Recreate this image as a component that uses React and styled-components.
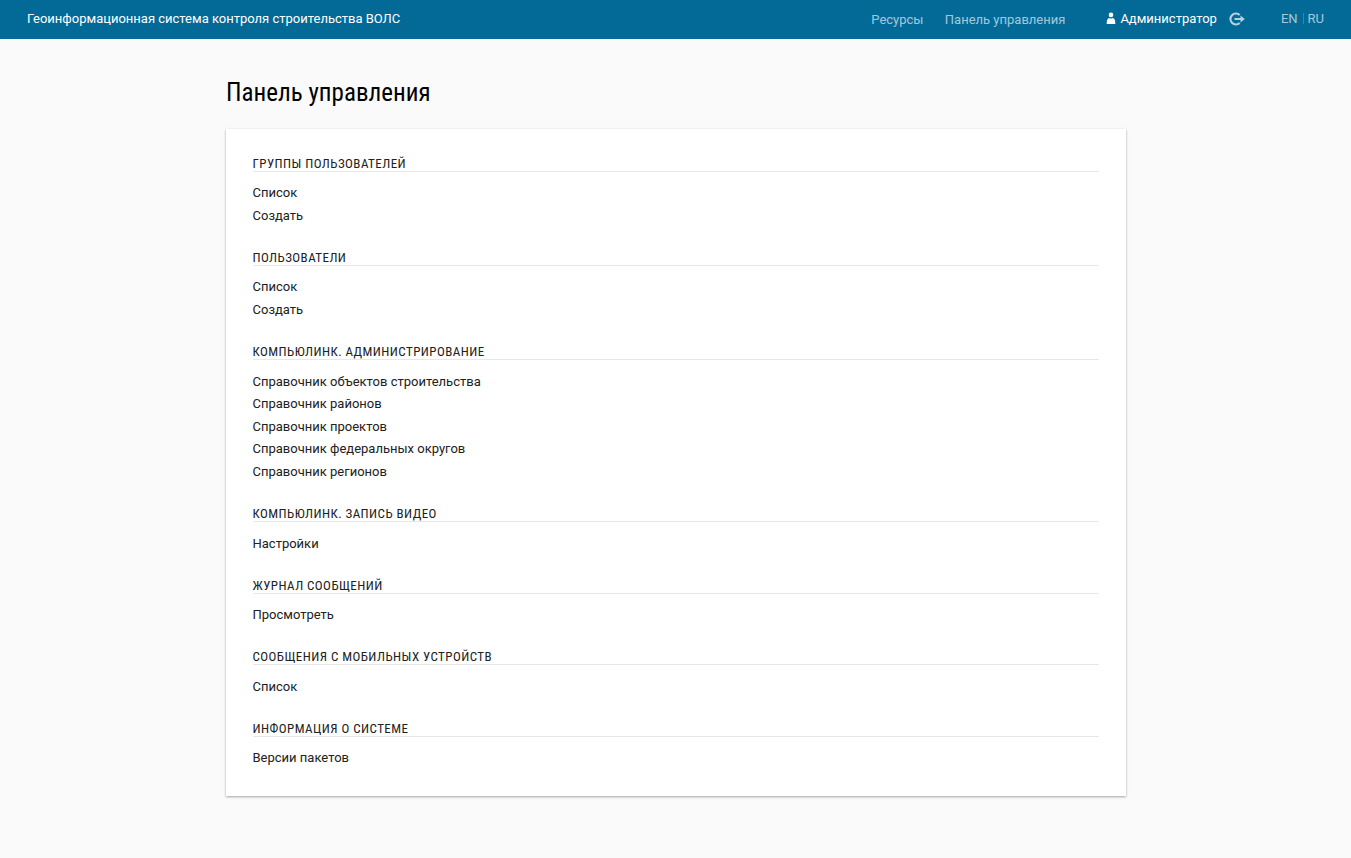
import React from 'react';
import styled, { createGlobalStyle } from 'styled-components';

const Global = createGlobalStyle`
  *{box-sizing:border-box}
  body{margin:0;background:#fafafa;font:13px/22.63px Roboto,sans-serif;color:#212121}
  a{color:inherit;text-decoration:none}
`;
const Header = styled.header`
  height:39px;background:#036a98;color:#fff;display:flex;align-items:center;padding:0 27px;line-height:20px;white-space:nowrap;
`;
const Brand = styled.a`margin-right:auto;padding-bottom:2px;`;
const Nav = styled.nav`display:flex;gap:21.4px;color:rgba(255,255,255,.65);margin-right:41px;`;
const User = styled.div`display:flex;align-items:center;padding-bottom:2px;margin-right:36px;`;
const UserIcon = styled.svg`width:10px;height:12px;margin:0 4px 1px 0;`;
const LogoutIcon = styled.svg`width:16px;height:14px;margin-left:12px;opacity:.7;`;
const Langs = styled.div`display:flex;align-items:center;padding-bottom:2px;color:rgba(255,255,255,.65);`;
const Divider = styled.span`width:1px;height:11px;margin:0 4px 0 5px;background:rgba(255,255,255,.2);`;
const Main = styled.main`width:900px;margin:0 auto;padding:37px 0 60px;`;
const Title = styled.h1`
  margin:0 0 21px;font:400 26px/32px Roboto,sans-serif;font-stretch:75%;color:#000;
  transform:scaleX(.962);transform-origin:left;
`;
const Card = styled.div`
  height:667px;background:#fff;padding:26.05px 27px;box-shadow:0 1px 3px rgba(0,0,0,.12),0 1px 2px rgba(0,0,0,.24);
`;
const Section = styled.section`margin-bottom:21.54px;`;
const Heading = styled.h2`
  margin:0 0 10.34px;height:17px;border-bottom:1px solid #e8e8e8;
  font:400 13px/17px Roboto,sans-serif;font-stretch:75%;letter-spacing:.45px;text-transform:uppercase;
`;
const Item = styled.a`display:block;height:22.63px;`;

const sections = [
  ['Группы пользователей', ['Список', 'Создать']],
  ['Пользователи', ['Список', 'Создать']],
  ['Компьюлинк. Администрирование', ['Справочник объектов строительства', 'Справочник районов', 'Справочник проектов', 'Справочник федеральных округов', 'Справочник регионов']],
  ['Компьюлинк. Запись видео', ['Настройки']],
  ['Журнал сообщений', ['Просмотреть']],
  ['Сообщения с мобильных устройств', ['Список']],
  ['Информация о системе', ['Версии пакетов']],
];

export default function App() {
  return (
    <>
      <Global />
      <Header>
        <Brand href="#">Геоинформационная система контроля строительства ВОЛС</Brand>
        <Nav><a href="#">Ресурсы</a><a href="#">Панель управления</a></Nav>
        <User>
          <UserIcon viewBox="0 0 10 12" fill="#fff"><circle cx="5" cy="2.9" r="2.3" /><path d="M.7 11C.7 8 1.7 6.2 3.2 6Q5 7 6.8 6C8.3 6.2 9.3 8 9.3 11V12H.7Z" /></UserIcon>
          Администратор
          <LogoutIcon viewBox="0 0 16 14" fill="none" stroke="#fff" strokeWidth="2.1"><path d="M10.7 3A5.5 5.5 0 1 0 10.7 11M5.5 7H13" /><path d="M11.5 3.4L15.8 7L11.5 10.6Z" fill="#fff" stroke="none" /></LogoutIcon>
        </User>
        <Langs><a href="#">EN</a><Divider /><a href="#">RU</a></Langs>
      </Header>
      <Main>
        <Title>Панель управления</Title>
        <Card>
          {sections.map(([name, items]) => (
            <Section key={name}>
              <Heading>{name}</Heading>
              {items.map((item) => <Item href="#" key={item}>{item}</Item>)}
            </Section>
          ))}
        </Card>
      </Main>
    </>
  );
}
